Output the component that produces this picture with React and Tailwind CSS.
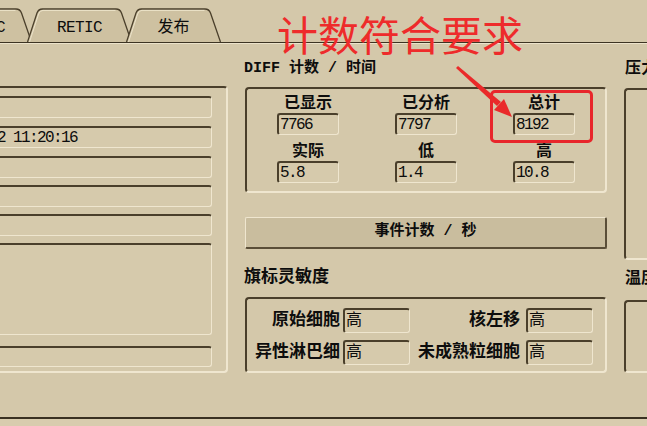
import React from 'react';

const sunken =
  'border-t-[#4a3f2b] border-l-[#4a3f2b] border-b-[#efe6cf] border-r-[#efe6cf]';

function Field({ className = '', children }) {
  return (
    <div
      className={`flex items-center border-t-2 border-l-2 border-b border-r rounded-[3px] bg-[#d6caac] ${sunken} ${className}`}
    >
      {children}
    </div>
  );
}

function Group({ className = '', children }) {
  return (
    <div className={`border-2 rounded-[4px] ${sunken} ${className}`}>{children}</div>
  );
}

function Tab({ w, className = '', children }) {
  const d = `M0.5 34 L10 5 Q11.5 1 15.5 1 L${w - 16} 1 Q${w - 12} 1 ${w - 10.5} 5 L${w - 0.5} 34`;
  const hi = `M2.5 34 L11.6 6 Q12.8 2.4 16 2.4 L${w - 16.5} 2.4`;
  return (
    <div className={`relative h-[34px] shrink-0 flex items-center pt-[6px] ${className}`}>
      <svg className="absolute inset-0" width={w} height="34" viewBox={`0 0 ${w} 34`}>
        <path d={d} fill="#cec1a1" stroke="#4a3f2b" strokeWidth="1.3" />
        <path d={hi} fill="none" stroke="#ece3ca" strokeWidth="1" />
      </svg>
      <span className="relative">{children}</span>
    </div>
  );
}

export default function App() {
  return (
    <div className="relative w-[647px] h-[426px] overflow-hidden bg-[#d4c8aa] text-[#0d0d0d] font-['Liberation_Mono','Noto_Sans_CJK_SC',monospace]">
      {/* tabs */}
      <div className="h-[43px] border-b border-b-[#3d3423] flex items-end">
        <div className="flex items-end ml-[-80px]">
          <Tab w={112} className="w-[112px] justify-end pr-[27px] text-[16px] tracking-[-0.6px]">BASIC</Tab>
          <Tab w={105} className="w-[105px] ml-[-5px] justify-center text-[16px] tracking-[-0.6px]">RETIC</Tab>
          <Tab w={95} className="w-[95px] ml-[-6px] justify-center text-[16px]">发布</Tab>
        </div>
      </div>

      {/* main page */}
      <div className="flex h-[374px] border-t border-t-[#ece3cb]">
        {/* left column */}
        <Group className="ml-[-10px] mt-[42px] w-[238px] h-[287px] shrink-0 pl-[2px] pr-[14px] pt-[8px]">
          <Field className="h-[22px]" />
          <Field className="mt-[8px] h-[22px] pl-[1px] text-[16px] tracking-[-1.6px]">2 11:20:16</Field>
          <Field className="mt-[8px] h-[22px]" />
          <Field className="mt-[7px] h-[22px]" />
          <Field className="mt-[7px] h-[22px]" />
          <Field className="mt-[7px] h-[92px]" />
          <Field className="mt-[11px] h-[21px]" />
        </Group>

        {/* middle column */}
        <div className="ml-[16px] w-[363px] shrink-0">
          <div className="mt-[16px] h-[18px] leading-[18px] text-[15px] font-bold">DIFF 计数 / 时间</div>
          <Group className="mt-[9px] ml-[1px] w-[362px] h-[106px] pl-[30px] pt-[7px]">
            <div className="grid grid-cols-[62px_62px_62px] gap-x-[56px] gap-y-[9px]">
              {[
                ['已显示', '7766'],
                ['已分析', '7797'],
                ['总计', '8192'],
                ['实际', '5.8'],
                ['低', '1.4'],
                ['高', '10.8'],
              ].map(([label, value]) => (
                <div key={label} className="flex flex-col">
                  <div className="h-[17px] leading-[17px] text-[16px] font-bold text-center">{label}</div>
                  <Field className="h-[22px] text-[16px] tracking-[-1.6px] pl-[1px]">{value}</Field>
                </div>
              ))}
            </div>
          </Group>

          <button className="mt-[24px] ml-[1px] w-[362px] h-[32px] flex items-center justify-center rounded-[2px] bg-[#c9bd9e] border-t border-l border-b-2 border-r-2 border-t-[#efe6cf] border-l-[#efe6cf] border-b-[#5a4e38] border-r-[#5a4e38] text-[15px] font-bold">
            事件计数 / 秒
          </button>

          <div className="mt-[19px] h-[20px] leading-[20px] text-[17px] font-bold">旗标灵敏度</div>
          <Group className="mt-[9px] ml-[1px] w-[362px] h-[76px] pt-[9px] flex flex-col gap-[7px]">
            {[
              ['原始细胞', '核左移'],
              ['异性淋巴细', '未成熟粒细胞'],
            ].map(([a, b]) => (
              <div key={a} className="flex items-center h-[25px]">
                <div className="w-[93px] text-right text-[17px] font-bold leading-[20px]">{a}</div>
                <Field className="ml-[3px] w-[67px] h-[25px] pl-[1px] text-[16px]">高</Field>
                <div className="w-[110px] text-right text-[17px] font-bold leading-[20px]">{b}</div>
                <Field className="ml-[6px] w-[67px] h-[25px] pl-[1px] text-[16px]">高</Field>
              </div>
            ))}
          </Group>
        </div>

        {/* right column */}
        <div className="ml-[18px] w-[100px] shrink-0">
          <div className="mt-[16px] h-[18px] leading-[18px] text-[16px] font-bold whitespace-nowrap">压力</div>
          <Group className="mt-[10px] ml-[-1px] w-[100px] h-[172px]" />
          <div className="mt-[10px] h-[18px] leading-[18px] text-[16px] font-bold whitespace-nowrap">温度</div>
          <Group className="mt-[12px] ml-[-1px] w-[100px] h-[73px]" />
        </div>
      </div>

      <div className="h-[9px] border-t-2 border-t-[#3a3122] bg-[#d8ccae]" />

      {/* red annotation */}
      <div className="absolute left-[277px] top-[13px] text-[41px] leading-[41px] text-[#ee2b2b] font-['Noto_Sans_CJK_SC',sans-serif] whitespace-nowrap">
        计数符合要求
      </div>
      <div className="absolute left-[490px] top-[90px] w-[103px] h-[53px] border-[3px] border-[#e8262b] rounded-[5px]" />
      <svg className="absolute inset-0 pointer-events-none" width="647" height="426" viewBox="0 0 647 426">
        <polygon points="456,68 458,66 501,102 497,106" fill="#ea2a2a" />
        <polygon points="512,117 494,110 504,99" fill="#ea2a2a" />
      </svg>
    </div>
  );
}
